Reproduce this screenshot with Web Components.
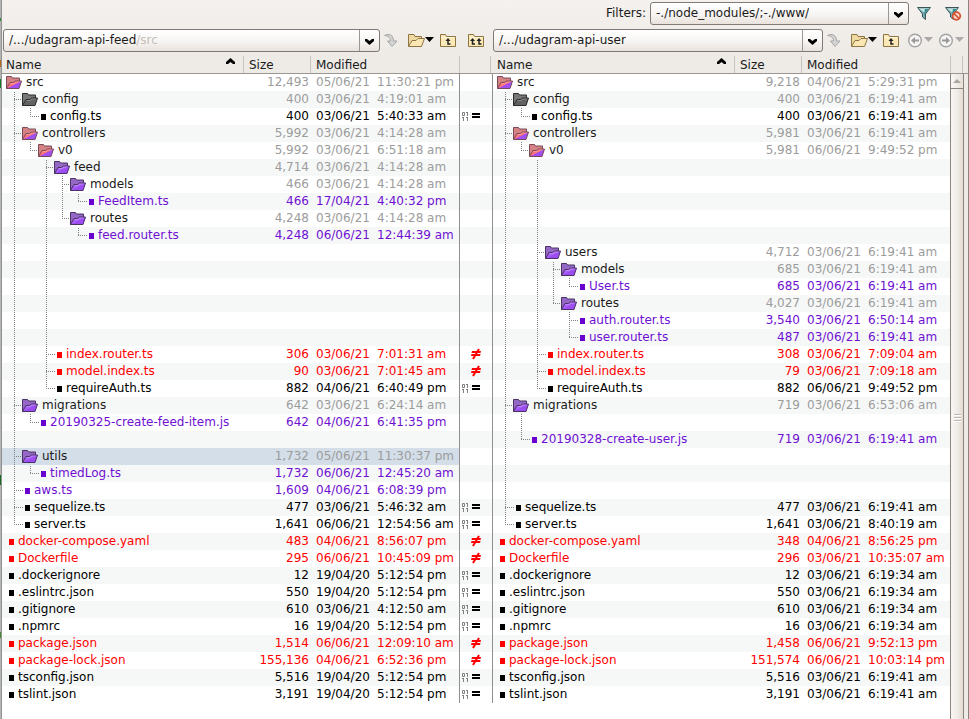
<!DOCTYPE html>
<html lang="en">
<head>
<meta charset="utf-8">
<title>Folder compare</title>
<style>
  html, body { height: 100%; margin: 0; overflow: hidden; }
  body { font: 12px/17px "DejaVu Sans", sans-serif; color: #1a1a1a; background: #fff; }
</style>
</head>
<body>
<compare-app></compare-app>
<script>
const folder = kind => {
  const c = { dark: ['#777', '#626262', '#626262', '#2c2c2c'], purple: ['#9468c4', '#a95ffa', '#9c4cf0', '#4a3266'], mixed: ['#d58284', '#ff7476', '#a04ff5', '#7b4a58'] }[kind];
  return `<svg class="folder" width="16" height="13" viewBox="0 0 16 13" aria-hidden="true">
    <path d="M.5 12.5V.5h5l1 1.5h7v4" fill="${c[0]}" stroke="${c[3]}"/>
    <path d="M1 12.5 4 6.5h3.500l2-1.500h6L13 12.500z" fill="${c[1]}"/>
    <path d="M1 12.500 15.500 5 13 12.500z" fill="${c[2]}"/>
    <path d="M.5 12.500 4 6.500h3.500l2-1.500h6L13 12.500z" fill="none" stroke="${c[3]}"/>
    <path d="M4.500 7.500H8l2-1.500h4" fill="none" stroke="#fff" stroke-opacity=".25"/></svg>`;
};
const openFolder = '<path d="M.5 13V1.500h5.500l1 2h6.500V6" fill="#eed9a0" stroke="#8d7440"/><path d="M.5 13.500 4 7.500h4l2-2h6.500l-3 8z" fill="#fbe7b4" stroke="#8d7440"/>';
const closedFolder = '<path d="M.5 13.500v-12h5l1 2h9v10z" fill="#fbe9b8" stroke="#8d7440"/><path d="M1.500 4.500h13" stroke="#fff8dc"/>';
const upArrow = x => `<path d="M${x} 8l2.500-3L${x + 5} 8z" fill="#222"/><path d="M${x + 2.5} 7v4h2.500" fill="none" stroke="#222" stroke-width="1.500"/>`;
const caret = (x, f) => `<path d="M${x} 4h9l-4.500 5z" fill="${f}"/>`;
const funnel = '<path d="M.5 1.500h13L8.500 8v5.500L5.500 11V8z" fill="#79aeb0" stroke="#3d5558"/><path d="M2 2.500h10L8 7z" fill="#c8e4e3"/><path d="M8 3h3.500L7.500 8v4L7 8z" fill="#2f8b8c"/>';
const round = d => `<circle cx="7" cy="7.500" r="6.300" fill="#f6f5f4" stroke="#a3a3a3" stroke-width="1.400"/><path d="${d}" fill="#999"/>`;
const ICONS = {
  go: [14, '<path d="M.5 2.500C5 0 9.500 2 9.500 8H13L8 13.500 3.500 8H6.500C6.500 4.500 4.500 3 .5 2.500z" fill="#d4d4d4" stroke="#a6a6a6"/>'],
  open: [26, openFolder + caret(17, '#000')],
  up: [16, closedFolder + upArrow(5.5)],
  upup: [17, closedFolder + upArrow(2) + upArrow(8.5)],
  back: [26, round('M3 7.500 7 4v2.500h4v2H7V11z') + caret(16, '#aaa')],
  forward: [26, round('M11 7.500 7 4v2.500H3v2h4V11z') + caret(16, '#aaa')],
  filter: [14, funnel],
  nofilter: [17, funnel + '<circle cx="11.500" cy="10" r="3.800" fill="#f5d7d0" stroke="#d8502f" stroke-width="1.700"/><path d="M9 7.500 14 12.500" stroke="#d8502f" stroke-width="1.700"/>']
};

class ToolButton extends HTMLElement {
  connectedCallback() {
    const [w, art] = ICONS[this.getAttribute('icon')];
    this.attachShadow({ mode: 'open' }).innerHTML = `<style>
      :host { display: block; flex: none; }
      button { display: block; border: 0; padding: 0; background: none; }
      svg { display: block; }
    </style><button type="button" aria-label="${this.getAttribute('label')}"><svg width="${w}" height="15" viewBox="0 0 ${w} 15">${art}</svg></button>`;
  }
}
customElements.define('tool-button', ToolButton);

class ComboBox extends HTMLElement {
  connectedCallback() {
    this.attachShadow({ mode: 'open' }).innerHTML = `<style>
      :host { display: flex; box-sizing: border-box; height: 23px; min-width: 0; border: 1px solid #7f7a75; border-radius: 3px; background: linear-gradient(#fff, #f8f6f4 50%, #e9e2dc); }
      .text { flex: 1; min-width: 0; display: flex; align-items: center; padding-left: 5px; overflow: hidden; }
      input { field-sizing: content; min-width: 0; border: 0; padding: 0; margin: 0; background: none; font: inherit; color: inherit; outline: 0; }
      .rest { color: #c3beba; }
      button { width: 20px; padding: 3px 0 0; border: 0; border-left: 1px solid #9b9691; background: none; display: grid; place-items: center; }
    </style>
    <div class="text"><input aria-label="${this.getAttribute('label')}" value="${this.getAttribute('value')}"><span class="rest"><slot></slot></span></div>
    <button type="button" aria-label="Show list"><svg width="9" height="6" viewBox="0 0 9 6"><path d="M0 0h2l2.500 2L7 0h2v2L4.500 6 0 2z" fill="#000"/></svg></button>`;
  }
}
customElements.define('combo-box', ComboBox);

/* Guides, one character per level: "|" passes through, "t" branches, "l" ends, " " is empty. */
const guide = (ch, row) => {
  const dash = 'stroke="#808080" stroke-dasharray="1 1"';
  const end = ch === 'l' ? 9 : 17;
  return `<svg width="16" height="17" aria-hidden="true">${ch === ' ' ? '' : `<path d="M8.500 0V${end}" ${dash} stroke-dashoffset="${row % 2}"/>`}${'tl'.includes(ch) ? `<path d="M8 8.500H16" ${dash}/>` : ''}</svg>`;
};
const bullet = (depth, color) => `<svg width="8" height="17" aria-hidden="true">${depth ? '<path d="M0 8.500H2" stroke="#808080" stroke-dasharray="1 1"/>' : ''}<rect x="3" y="6" width="5" height="6" fill="${color}"/></svg>`;

const LEFT = `
|src|mixed|12,493|05/06/21 11:30:21 pm
t|config|dark|400|03/06/21 4:19:01 am
!l|config.ts|same|400|03/06/21 5:40:33 am
t|controllers|mixed|5,992|03/06/21 4:14:28 am
!l|v0|mixed|5,992|03/06/21 6:51:18 am
! t|feed|purple|4,714|03/06/21 4:14:28 am
! !t|models|purple|466|03/06/21 4:14:28 am
! !!l|FeedItem.ts|only|466|17/04/21 4:40:32 pm
! !l|routes|purple|4,248|03/06/21 4:14:28 am
! ! l|feed.router.ts|only|4,248|06/06/21 12:44:39 am
! !
! !
! !
! !
! !
! !
! t|index.router.ts|diff|306|03/06/21 7:01:31 am
! t|model.index.ts|diff|90|03/06/21 7:01:45 am
! l|requireAuth.ts|same|882|04/06/21 6:40:49 pm
t|migrations|purple|642|03/06/21 6:24:14 am
!l|20190325-create-feed-item.js|only|642|04/06/21 6:41:35 pm
!
t|utils|purple|1,732|05/06/21 11:30:37 pm|selected
!l|timedLog.ts|only|1,732|06/06/21 12:45:20 am
t|aws.ts|only|1,609|04/06/21 6:08:39 pm
t|sequelize.ts|same|477|03/06/21 5:46:32 am
l|server.ts|same|1,641|06/06/21 12:54:56 am
|docker-compose.yaml|diff|483|04/06/21 8:56:07 pm
|Dockerfile|diff|295|06/06/21 10:45:09 pm
|.dockerignore|same|12|19/04/20 5:12:54 pm
|.eslintrc.json|same|550|19/04/20 5:12:54 pm
|.gitignore|same|610|03/06/21 4:12:50 am
|.npmrc|same|16|19/04/20 5:12:54 pm
|package.json|diff|1,514|06/06/21 12:09:10 am
|package-lock.json|diff|155,136|04/06/21 6:52:36 pm
|tsconfig.json|same|5,516|19/04/20 5:12:54 pm
|tslint.json|same|3,191|19/04/20 5:12:54 pm`;
const RIGHT = `
|src|mixed|9,218|04/06/21 5:29:31 pm
t|config|dark|400|03/06/21 6:19:41 am
!l|config.ts|same|400|03/06/21 6:19:41 am
t|controllers|mixed|5,981|03/06/21 6:19:41 am
!l|v0|mixed|5,981|06/06/21 9:49:52 pm
! !
! !
! !
! !
! !
! t|users|purple|4,712|03/06/21 6:19:41 am
! !t|models|purple|685|03/06/21 6:19:41 am
! !!l|User.ts|only|685|03/06/21 6:19:41 am
! !l|routes|purple|4,027|03/06/21 6:19:41 am
! ! t|auth.router.ts|only|3,540|03/06/21 6:50:14 am
! ! l|user.router.ts|only|487|03/06/21 6:19:41 am
! t|index.router.ts|diff|308|03/06/21 7:09:04 am
! t|model.index.ts|diff|79|03/06/21 7:09:18 am
! l|requireAuth.ts|same|882|06/06/21 9:49:52 pm
t|migrations|purple|719|03/06/21 6:53:06 am
!!
!l|20190328-create-user.js|only|719|03/06/21 6:19:41 am
!
!
!
t|sequelize.ts|same|477|03/06/21 6:19:41 am
l|server.ts|same|1,641|03/06/21 8:40:19 am
|docker-compose.yaml|diff|348|04/06/21 8:56:25 pm
|Dockerfile|diff|296|03/06/21 10:35:07 am
|.dockerignore|same|12|03/06/21 6:19:34 am
|.eslintrc.json|same|550|03/06/21 6:19:34 am
|.gitignore|same|610|03/06/21 6:19:34 am
|.npmrc|same|16|03/06/21 6:19:34 am
|package.json|diff|1,458|06/06/21 9:52:13 pm
|package-lock.json|diff|151,574|06/06/21 10:03:14 pm
|tsconfig.json|same|5,516|03/06/21 6:19:41 am
|tslint.json|same|3,191|03/06/21 6:19:41 am`;
const parse = text => text.slice(1).split('\n').map(line => {
  const [guides, name, kind, size, time, state] = line.split('|');
  return { guides, name, kind, size, time, state };
});
const COLORS = { same: '#000', diff: '#f00', only: '#6a00d0' };
const stamp = time => time ? time.replace(/^(\S+) (.*)$/, '<time><span>$1</span> <span>$2</span></time>') : '';

class FolderPane extends HTMLElement {
  connectedCallback() {
    const rows = parse(this.getAttribute('side') === 'left' ? LEFT : RIGHT);
    this.attachShadow({ mode: 'open' }).innerHTML = `<style>
      :host { display: block; min-width: 0; background: #fff; }
      table { width: 100%; table-layout: fixed; border-collapse: separate; border-spacing: 0; }
      col.size { width: 67px; } col.time { width: 149px; }
      th { height: 20px; box-sizing: border-box; padding: 2px 0 0; text-align: left; font-weight: normal; background: #eeebe7; border-bottom: 1px solid #9b9692; line-height: 17px; }
      th button { display: flex; width: 100%; align-items: center; justify-content: space-between; box-sizing: border-box; height: 17px; border: 0; border-left: 1px solid #c9c4bf; padding: 2px 8px 0 5px; background: none; font: inherit; color: inherit; }
      th:first-child button { border-left: 0; padding-left: 4px; }
      th svg { align-self: flex-start; }
      td { height: 17px; padding: 0; white-space: nowrap; }
      tr:nth-child(even) td { background: #f6f8f8; }
      tr.selected:nth-child(odd) td { background: #d3dee9; }
      .name { display: flex; align-items: center; height: 17px; padding-left: 4px; }
      .name svg { flex: none; }
      .name span { padding-left: 4px; }
      .n { text-align: right; padding-right: 1px; }
      .t { padding-left: 6px; }
      time { display: grid; grid-template-columns: 61px 1fr; }
      .dir .n, .dir .t { color: #9c9c9c; }
      .diff { color: #f00; } .only { color: #6f10d2; } .same { color: #000; }
    </style>
    <table><colgroup><col><col class="size"><col class="time"></colgroup>
      <thead><tr><th scope="col" aria-sort="ascending"><button type="button">Name<svg width="9" height="6" viewBox="0 0 9 6"><path d="M0 6h2l2.500-2L7 6h2V4L4.500 0 0 4z"/></svg></button></th><th scope="col"><button type="button">Size</button></th><th scope="col"><button type="button">Modified</button></th></tr></thead>
      <tbody>${rows.map((r, i) => {
        const file = COLORS[r.kind];
        const lines = [...r.guides].map(c => guide(c === '!' ? '|' : c, i)).join('');
        const item = r.name ? `${file ? bullet(r.guides.length, file) : folder(r.kind)}<span>${r.name}</span>` : '';
        return `<tr class="${file ? r.kind : 'dir'} ${r.state || ''}"><td><div class="name">${lines}${item}</div></td><td class="n">${r.size || ''}</td><td class="t">${stamp(r.time)}</td></tr>`;
      }).join('')}</tbody></table>`;
  }
}
customElements.define('folder-pane', FolderPane);

class DiffGutter extends HTMLElement {
  connectedCallback() {
    const equal = `<svg width="32" height="17" viewBox="0 0 32 17" role="img" aria-label="equal"><g fill="none" stroke="#808080"><path d="M2.500 4.500h2v3h-2zM7.500 4v4M6 4.500h1M3.500 9v4M2 9.500h1M7.500 9v4M6 9.500h1"/></g><path d="M12 5h8v2h-8zM12 8h8v2h-8z"/></svg>`;
    const differ = `<svg width="32" height="17" viewBox="0 0 32 17" role="img" aria-label="different"><path d="M12 5h9l-.500 2H11.500zM11.500 8h9l-.500 2H11z" fill="#f00"/><path d="M19 3 13 13" stroke="#f00" stroke-width="2"/></svg>`;
    this.attachShadow({ mode: 'open' }).innerHTML = `<style>
      :host { display: block; background: #fff; }
      .head { height: 20px; box-sizing: border-box; background: #eeebe7; border-bottom: 1px solid #9b9692; padding: 2px 2px 0 0; }
      .head div { height: 17px; border: solid #c9c4bf; border-width: 0 1px; }
      ul { margin: 0; padding: 0; list-style: none; border: solid #8f8f8f; border-width: 0 1px; }
      li { height: 17px; }
      li:nth-child(even) { background: #f6f8f8; }
      svg { display: block; }
    </style><div class="head"><div></div></div><ul>${parse(LEFT).map(r => `<li>${r.kind === 'same' ? equal : r.kind === 'diff' ? differ : ''}</li>`).join('')}</ul>`;
  }
}
customElements.define('diff-gutter', DiffGutter);

class PaneScroller extends HTMLElement {
  connectedCallback() {
    this.attachShadow({ mode: 'open' }).innerHTML = `<style>
      :host { display: block; min-height: 0; overflow: hidden; }
      .head { height: 20px; box-sizing: border-box; padding-top: 2px; border-bottom: 1px solid #9b9692; }
      .head div { height: 17px; width: 13px; box-sizing: border-box; border: solid #c9c4bf; border-width: 0 1px; }
      .bar { width: 14px; border: solid #8b857f; border-width: 0 1px; box-sizing: border-box; }
      button { display: grid; place-items: center; width: 100%; height: 15px; padding: 0; border: 0; border-bottom: 1px solid #8b857f; border-radius: 3px 3px 0 0; background: linear-gradient(90deg, #faf8f7, #e6dfd8); }
      .thumb { height: calc(100vh - 62px); display: grid; place-items: center; background: linear-gradient(90deg, #f8f6f4, #f0ece8 50%, #e3dbd3); }
    </style><div class="head"><div></div></div>
    <div class="bar"><button type="button" aria-label="Scroll up"><svg width="8" height="4"><path d="M4 0l4 4H0z" fill="#aaa5a0"/></svg></button>
    <div class="thumb"><svg width="7" height="8"><path d="M0 .5h7M0 3.500h7M0 6.500h7" stroke="#bdb7b1"/><path d="M0 1.500h7M0 4.500h7M0 7.500h7" stroke="#fff"/></svg></div></div>`;
  }
}
customElements.define('pane-scroller', PaneScroller);

class CompareApp extends HTMLElement {
  connectedCallback() {
    this.attachShadow({ mode: 'open' }).innerHTML = `<style>
      :host { display: grid; box-sizing: border-box; height: 100vh; overflow: hidden;
        grid-template: 28px 26px minmax(0, 1fr) / minmax(0, 1fr) 34px minmax(0, 1fr) 18px;
        border-right: 1px solid #8b857f; padding-left: 2px;
        background:
          linear-gradient(#b4b4b4 0 18px, #2d8a35 18px 21px, #b4b4b4 21px 60px, #b56a1a 60px 67px, #b4b4b4 67px 79px, #167a28 79px 88px, #b4b4b4 88px 475px, #146b20 475px 485px, #b4b4b4 485px 632px, #468b33 632px 638px, #b4b4b4 638px) 0 0 / 1px 100% no-repeat,
          linear-gradient(#929292, #929292) 1px 0 / 1px 100% no-repeat,
          linear-gradient(#f4f1ee, #eeebe7 54px); }
      .filters { grid-column: 1 / -1; display: flex; justify-content: flex-end; align-items: center; padding: 0 6px 2px 0; }
      .filters combo-box { flex: 0 1 259px; margin: 0 8px 0 4px; }
      .filters tool-button + tool-button { margin-left: 14px; }
      .tools { grid-column: span 2; display: flex; align-items: center; min-width: 0; padding: 0 8px 2px 1px; }
      .tools.r { padding: 0 3px 2px 0; }
      .tools combo-box { flex: 1; margin-right: 4px; }
      .m5 { margin-left: 5px; } .m6 { margin-left: 6px; } .m9 { margin-left: 9px; } .m10 { margin-left: 10px; } .m12 { margin-left: 12px; }
      folder-pane, diff-gutter, pane-scroller { min-height: 0; }
    </style>
    <div class="filters"><span>Filters:</span><combo-box label="Filters" value="-./node_modules/;-./www/"></combo-box><tool-button icon="filter" label="Filter"></tool-button><tool-button icon="nofilter" label="Suppress filters"></tool-button></div>
    <div class="tools"><combo-box label="Left folder" value="/.../udagram-api-feed">/src</combo-box><tool-button icon="go" label="Load"></tool-button><tool-button class="m10" icon="open" label="Browse"></tool-button><tool-button class="m6" icon="up" label="Up one level"></tool-button><tool-button class="m12" icon="upup" label="Up both"></tool-button></div>
    <div class="tools r"><combo-box label="Right folder" value="/.../udagram-api-user"></combo-box><tool-button icon="go" label="Load"></tool-button><tool-button class="m10" icon="open" label="Browse"></tool-button><tool-button class="m6" icon="up" label="Up one level"></tool-button><tool-button class="m9" icon="back" label="Back"></tool-button><tool-button class="m5" icon="forward" label="Forward"></tool-button></div>
    <folder-pane side="left"></folder-pane><diff-gutter></diff-gutter><folder-pane side="right"></folder-pane><pane-scroller></pane-scroller>`;
  }
}
customElements.define('compare-app', CompareApp);
</script>
</body>
</html>
